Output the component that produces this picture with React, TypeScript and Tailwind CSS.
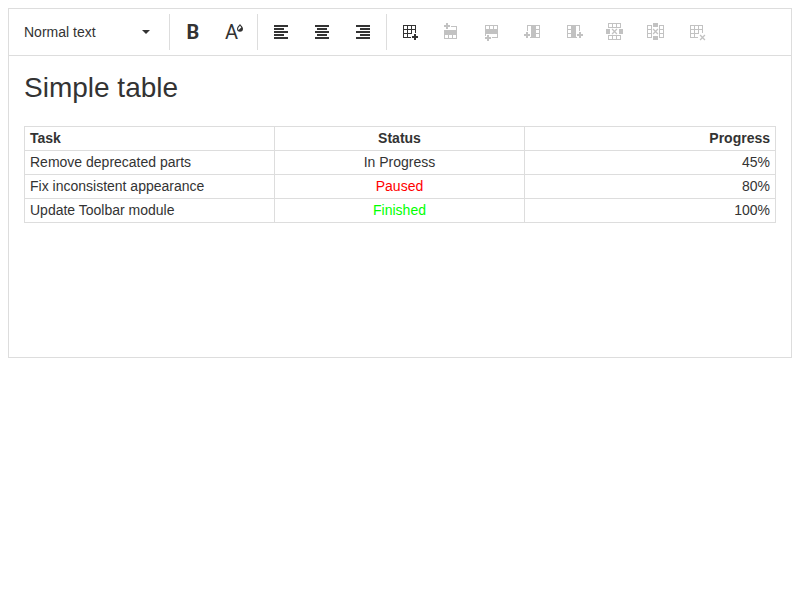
import type { ReactNode } from "react";

function Icon({ children }: { children: ReactNode }) {
  return (
    <svg className="h-[18px] w-[18px] shrink-0 overflow-visible" viewBox="0 0 18 18" fill="currentColor">
      {children}
    </svg>
  );
}

function Tool({ label, disabled, children }: { label: string; disabled?: boolean; children: ReactNode }) {
  return (
    <button
      aria-label={label}
      disabled={disabled}
      className={`flex h-9 w-9 items-center justify-center ${disabled ? "text-[#c2c2c2]" : "text-[#333]"}`}
    >
      {children}
    </button>
  );
}

function Separator() {
  return <div className="h-9 w-px bg-[#ddd]" />;
}

const cross = "M.5 -.4L2.5 1.6 4.5 -.4 5.4 .5 3.4 2.5 5.4 4.5 4.5 5.4 2.5 3.4 .5 5.4 -.4 4.5 1.6 2.5 -.4 .5z";
const plus = "M2 0h2v2h2v2h-2v2h-2v-2h-2v-2h2z";
const rowCells = "M0 0h13v5h-13zM1 1v3h3v-3zM5 1v3h3v-3zM9 1v3h3v-3z";
const colCells = "M0 0h5v13h-5zM1 1v3h3v-3zM1 5v3h3v-3zM1 9v3h3v-3z";
const openGrid = "M2 2h13v8h-1v-3h-3v4h-4v3h3v1h-8zM3 3v3h3v-3zM7 3v3h3v-3zM11 3v3h3v-3zM3 7v3h3v-3zM7 7v3h3v-3zM3 11v3h3v-3z";

function At({ x, y, d }: { x: number; y: number; d: string }) {
  return <path transform={`translate(${x} ${y})`} d={d} fillRule="evenodd" />;
}

// Three-by-three grid whose lower right corner is left open for a badge.
function OpenGrid() {
  return <path fillRule="evenodd" d={openGrid} />;
}

const header = ["Task", "Status", "Progress"];
const rows = [
  { task: "Remove deprecated parts", status: "In Progress", progress: "45%", color: "" },
  { task: "Fix inconsistent appearance", status: "Paused", progress: "80%", color: "text-[#ff0000]" },
  { task: "Update Toolbar module", status: "Finished", progress: "100%", color: "text-[#00ff00]" },
];

export default function App() {
  return (
    <div className="h-[600px] bg-white p-2 font-['Liberation_Sans',Arial,sans-serif] text-sm text-[#333]">
      <div className="h-[350px] border border-[#ddd]">
        <div className="flex h-[47px] items-center border-b border-[#ddd]">
          <button className="flex h-9 w-40 items-center justify-between pr-[19px] pl-[15px]">
            <span>Normal text</span>
            <svg className="h-1 w-2" viewBox="0 0 8 4" fill="currentColor">
              <path d="M0 0h8L4 4z" />
            </svg>
          </button>
          <Separator />
          <div className="flex gap-[5px] px-[5px]">
            <Tool label="Bold">
              <span className="font-['Roboto',sans-serif] text-[20px] leading-none font-bold">B</span>
            </Tool>
            <Tool label="Font color">
              <span className="font-['Roboto',sans-serif] text-[20px] leading-none">A</span>
              <svg className="mb-[9px] -ml-px h-[8px] w-[6px]" viewBox="0 0 6 8" fill="currentColor">
                <path fillRule="evenodd" d="M3 0C4.2 1.6 6 3 6 4.8A3 3 0 0 1 0 4.8C0 3 1.8 1.6 3 0zM3 1.8C2.2 2.9 1.1 3.7 1.1 4.8c0 .5.2 1 .5 1.3L4.3 3.4C3.9 2.9 3.4 2.4 3 1.8z" />
              </svg>
            </Tool>
          </div>
          <Separator />
          <div className="flex gap-[5px] px-[5px]">
            <Tool label="Align left">
              <Icon><path d="M2 2h14v2H2zM2 5h10v2H2zM2 8h14v2H2zM2 11h10v2H2zM2 14h14v2H2z" /></Icon>
            </Tool>
            <Tool label="Align center">
              <Icon><path d="M2 2h14v2H2zM4 5h10v2H4zM2 8h14v2H2zM4 11h10v2H4zM2 14h14v2H2z" /></Icon>
            </Tool>
            <Tool label="Align right">
              <Icon><path d="M2 2h14v2H2zM6 5h10v2H6zM2 8h14v2H2zM6 11h10v2H6zM2 14h14v2H2z" /></Icon>
            </Tool>
          </div>
          <Separator />
          <div className="flex gap-[5px] px-[5px]">
            <Tool label="Insert table">
              <Icon><OpenGrid /><At x={11} y={11} d={plus} /></Icon>
            </Tool>
            <Tool label="Insert row above" disabled>
              <Icon>
                <At x={2} y={0} d={plus} />
                <path d="M9 3h6v4h-1v-3h-5zM2 7h13v5H2z" />
                <At x={2} y={11} d={rowCells} />
              </Icon>
            </Tool>
            <Tool label="Insert row below" disabled>
              <Icon>
                <At x={2} y={2} d={rowCells} />
                <path d="M2 6h13v9H9v-1h5v-3H3v2H2z" />
                <At x={2} y={12} d={plus} />
              </Icon>
            </Tool>
            <Tool label="Insert column left" disabled>
              <Icon>
                <path d="M3 2h9v13H6v-1h1V3H4v5H3z" />
                <At x={11} y={2} d={colCells} />
                <At x={0} y={9} d={plus} />
              </Icon>
            </Tool>
            <Tool label="Insert column right" disabled>
              <Icon>
                <At x={2} y={2} d={colCells} />
                <path d="M6 2h9v6h-1V3h-3v11h1v1H6z" />
                <At x={12} y={9} d={plus} />
              </Icon>
            </Tool>
            <Tool label="Delete row" disabled>
              <Icon>
                <At x={2} y={0} d={rowCells} />
                <At x={2} y={12} d={rowCells} />
                <path d="M0 6h4v5H0zM13 6h4v5h-4z" />
                <At x={6} y={6} d={cross} />
              </Icon>
            </Tool>
            <Tool label="Delete column" disabled>
              <Icon>
                <At x={0} y={2} d={colCells} />
                <At x={12} y={2} d={colCells} />
                <path d="M6 0h5v4H6zM6 13h5v4H6z" />
                <At x={6} y={6} d={cross} />
              </Icon>
            </Tool>
            <Tool label="Delete table" disabled>
              <Icon><OpenGrid /><At x={12} y={12} d={cross} /></Icon>
            </Tool>
          </div>
        </div>
        <div className="px-[15px] pt-[15px]">
          <h2 className="mb-[22px] text-[28px] leading-[33px]">Simple table</h2>
          <table className="w-full table-fixed border-collapse leading-[17px]">
            <colgroup>
              <col className="w-[250px]" />
              <col className="w-[250px]" />
              <col />
            </colgroup>
            <thead>
              <tr className="h-6">
                {header.map((title, i) => (
                  <th key={title} className={`border border-[#ddd] px-[5px] py-[3px] ${i === 0 ? "text-left" : i === 1 ? "text-center" : "text-right"}`}>
                    {title}
                  </th>
                ))}
              </tr>
            </thead>
            <tbody>
              {rows.map((row) => (
                <tr key={row.task} className="h-6">
                  <td className="border border-[#ddd] px-[5px] py-[3px]">{row.task}</td>
                  <td className={`border border-[#ddd] px-[5px] py-[3px] text-center ${row.color}`}>{row.status}</td>
                  <td className="border border-[#ddd] px-[5px] py-[3px] text-right">{row.progress}</td>
                </tr>
              ))}
            </tbody>
          </table>
        </div>
      </div>
    </div>
  );
}
